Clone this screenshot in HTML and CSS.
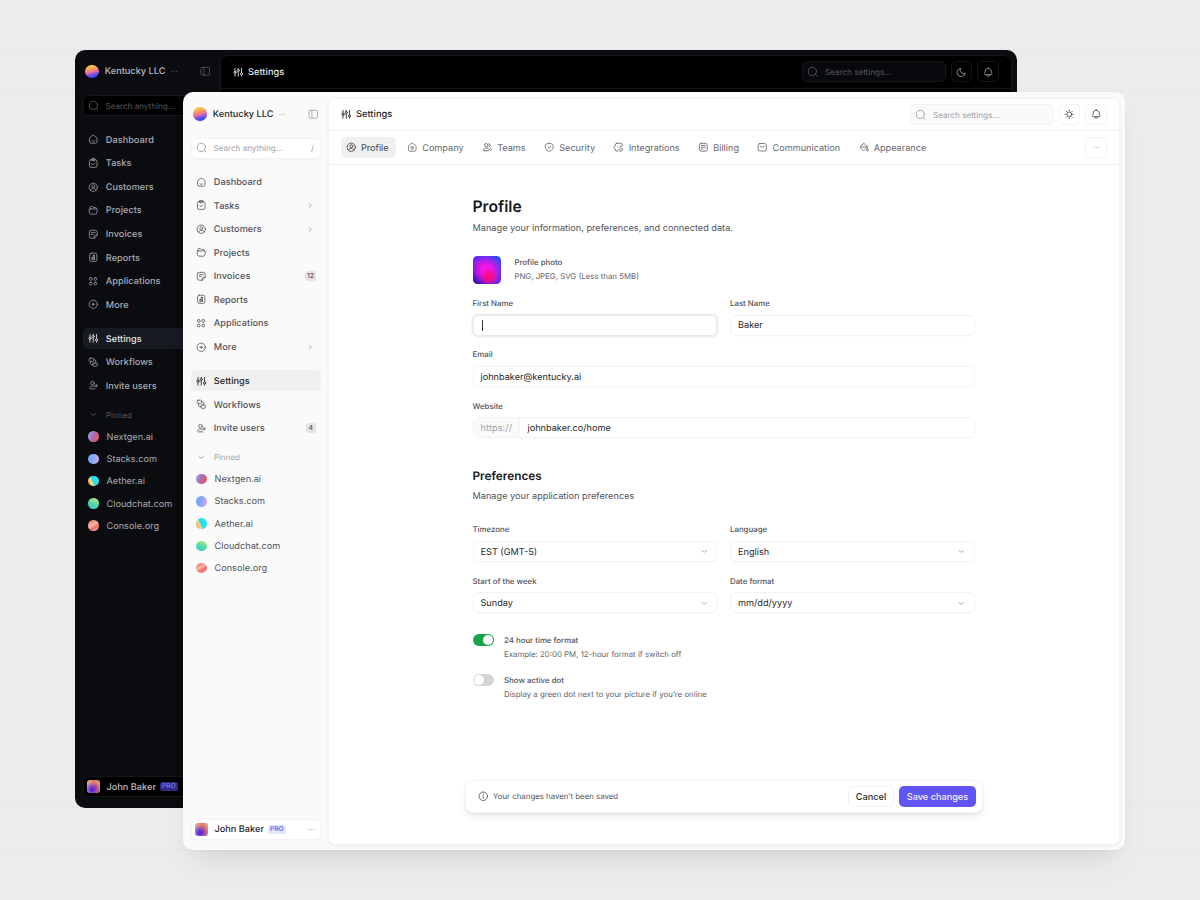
FILE: index.html
```html
<!DOCTYPE html>
<html lang="en">
<head>
<meta charset="utf-8">
<title>Settings</title>
<link rel="stylesheet" href="styles.css">
</head>
<body>
<svg class="defs" aria-hidden="true">
<symbol id="home" viewBox="0 0 16 16"><path d="M2.200 7.200c0-.8.4-1.600 1-2.100l3.300-2.800a2.300 2.300 0 0 1 3 0l3.300 2.800c.6.5 1 1.300 1 2.100v4.300a2.500 2.500 0 0 1-2.500 2.500H4.700a2.500 2.500 0 0 1-2.500-2.500z"/><path d="M5.800 10.300c1.200 1.300 3.200 1.300 4.400 0"/></symbol>
<symbol id="task" viewBox="0 0 16 16"><rect x="2.200" y="2.600" width="11.600" height="11.700" rx="2.600"/><path d="M5.500 1.500v1.800c0 .4.300.7.700.7h3.600c.4 0 .7-.3.700-.7V1.500zM5.800 8.900l1.600 1.600 2.900-3"/></symbol>
<symbol id="user" viewBox="0 0 16 16"><circle cx="8" cy="8" r="6.300"/><circle cx="8" cy="6.500" r="2.200"/><path d="M4 12.700c.3-2 1.800-3.100 4-3.100s3.700 1.100 4 3.100"/></symbol>
<symbol id="folder" viewBox="0 0 16 16"><path d="M3 6V3.600c0-.8.6-1.400 1.400-1.400h2.100l1.500 1.600h3.600c.8 0 1.400.6 1.400 1.400V6M3.200 6h9.600c1 0 1.700.9 1.500 1.900l-.8 4.100c-.2 1.200-1.200 2-2.400 2H4.900c-1.200 0-2.200-.8-2.400-2l-.8-4.100C1.500 6.900 2.200 6 3.200 6z"/></symbol>
<symbol id="invoice" viewBox="0 0 16 16"><path d="M9 14H5a3 3 0 0 1-3-3V5a3 3 0 0 1 3-3h6a3 3 0 0 1 3 3v4.500L9.500 14zM9.500 14v-2.500c0-1.100.9-2 2-2H14M5 5.500h6M5 8.300h3"/></symbol>
<symbol id="report" viewBox="0 0 16 16"><rect x="2.500" y="1.800" width="11" height="12.400" rx="2.600"/><path d="M5.800 11h4.400M6.200 11V8.200M8 11V5M9.800 11V5M8 5h1.800M6.200 8.200H8"/></symbol>
<symbol id="apps" viewBox="0 0 16 16"><rect x="2.200" y="2.500" width="4" height="4" rx="1.600"/><rect x="9.200" y="2.500" width="4" height="4" rx="1.600"/><rect x="2.200" y="9.500" width="4" height="4" rx="1.600"/><rect x="9.200" y="9.500" width="4" height="4" rx="1.600"/></symbol>
<symbol id="plus" viewBox="0 0 16 16"><circle cx="8" cy="8" r="6.300"/><path d="M8 6v4M6 8h4"/></symbol>
<symbol id="sliders" viewBox="0 0 16 16"><path d="M3 2v4M3 10v4M8 2v1.500M8 7.500V14M13 2v6.500M13 12.500V14"/><circle cx="3" cy="8" r="1.700"/><circle cx="8" cy="5.400" r="1.700"/><circle cx="13" cy="10.500" r="1.700"/></symbol>
<symbol id="flow" viewBox="0 0 16 16"><rect x="1.800" y="1.800" width="6.600" height="5" rx="1.500"/><rect x="7.600" y="9.200" width="6.600" height="5" rx="1.500"/><path d="M8.400 4.300h1.800c1 0 1.700.7 1.700 1.700v3.200M4 6.800V10c0 1 .7 1.700 1.700 1.700h1.900"/></symbol>
<symbol id="invite" viewBox="0 0 16 16"><circle cx="6.800" cy="4.800" r="2.700"/><path d="M10.500 13.500H4c-1.200 0-1.900-.9-1.600-1.900.6-1.700 2.200-2.400 4.400-2.400 1.200 0 2.300.3 3.100.9M12.500 6.800v4M10.500 8.800h4"/></symbol>
<symbol id="team" viewBox="0 0 16 16"><circle cx="6.500" cy="5" r="2.700"/><path d="M3.500 13.300h6.300c1 0 1.700-.8 1.300-1.700-.7-1.600-2.400-2.300-4.600-2.300s-3.900.7-4.500 2.300c-.4.9.4 1.700 1.500 1.700zM10.500 2.400a2.700 2.700 0 0 1 .5 5M12.600 9.500c1 .5 1.700 1.200 1.900 2.200.2.900-.4 1.600-1.300 1.600"/></symbol>
<symbol id="company" viewBox="0 0 16 16"><path d="M2.200 7.200c0-.8.4-1.600 1-2.100l3.300-2.800a2.300 2.300 0 0 1 3 0l3.300 2.800c.6.5 1 1.300 1 2.100v4.300a2.500 2.500 0 0 1-2.500 2.500H4.700a2.500 2.500 0 0 1-2.500-2.500zM9.700 7.300a2.200 2.200 0 1 0 0 3M8 8.800h1.500"/></symbol>
<symbol id="shield" viewBox="0 0 16 16"><path d="M6.900 2 3.500 3.200C2.600 3.500 2 4.300 2 5.300v2.300c0 3 1.900 5 4.900 6.300.7.300 1.500.3 2.200 0 3-1.300 4.900-3.300 4.900-6.300V5.300c0-1-.6-1.800-1.500-2.100L9.100 2a3.300 3.300 0 0 0-2.200 0zM5.800 7.800l1.700 1.700 3-3"/></symbol>
<symbol id="puzzle" viewBox="0 0 16 16"><path d="M5.500 2H12c1.100 0 2 .9 2 2v2.300c-2.200-.6-3.300.3-3.300 1.700s1.100 2.300 3.300 1.700V12c0 1.100-.9 2-2 2h-1.700c.5-1.700-.3-2.700-1.600-2.700S6.600 12.300 7.100 14H5.500c-1.100 0-2-.9-2-2v-1.500C2 10.200 1.300 9.300 1.300 8.200S2 6.200 3.500 6V4c0-1.100.9-2 2-2z"/></symbol>
<symbol id="bill" viewBox="0 0 16 16"><rect x="2" y="2" width="12" height="12" rx="2.800"/><path d="M5 5.300h6M5 8h6M5 10.700h2.500"/></symbol>
<symbol id="mail" viewBox="0 0 16 16"><rect x="1.700" y="2.300" width="12.600" height="11.400" rx="2.800"/><path d="m4.700 6 2.300 1.700c.6.400 1.400.4 2 0L11.300 6"/></symbol>
<symbol id="paint" viewBox="0 0 16 16"><path d="m6.200 2.900-4 4c-.6.600-.6 1.500 0 2.100l3.500 3.500c.6.600 1.500.6 2.100 0L13 7.300 8.500 2.900a1.600 1.600 0 0 0-2.300 0zM2.200 7.500H13M13 10.300c.8 1 1.300 1.600 1.300 2.300a1.300 1.300 0 0 1-2.600 0c0-.7.500-1.300 1.300-2.300z"/></symbol>
<symbol id="search" viewBox="0 0 16 16"><circle cx="7.500" cy="7.500" r="5.700"/><path d="m11.800 11.800 2.200 2.200"/></symbol>
<symbol id="panel" viewBox="0 0 16 16"><rect x="1.500" y="2" width="13" height="12" rx="2"/><path d="M6 2v12"/></symbol>
<symbol id="sun" viewBox="0 0 16 16"><circle cx="8" cy="8" r="3.500"/><path d="M8 1.500v1.300M8 13.200v1.300M1.500 8h1.300M13.200 8h1.300M3.400 3.400l.9.900M11.700 11.700l.9.900M3.400 12.600l.9-.9M11.700 4.300l.9-.9"/></symbol>
<symbol id="moon" viewBox="0 0 16 16"><path d="M6.600 2.200a5.600 5.600 0 0 0 7.300 7.300A6.200 6.200 0 1 1 6.600 2.200z"/></symbol>
<symbol id="bell" viewBox="0 0 16 16"><path d="M8 1.800c-2.700 0-4.500 2-4.600 4.400-.1 1.700-.2 2.200-.9 3.400-.6 1.100 0 2.200 1.200 2.200h8.600c1.200 0 1.800-1.100 1.200-2.200-.7-1.200-.8-1.700-.9-3.400C12.500 3.800 10.700 1.800 8 1.800zM5.800 11.800c0 1.500 1 2.400 2.200 2.400s2.200-.9 2.200-2.400"/></symbol>
<symbol id="info" viewBox="0 0 16 16"><circle cx="8" cy="8" r="6.500"/><path d="M8 7.500v3.700M8 4.800v.6"/></symbol>
<symbol id="right" viewBox="0 0 16 16"><path d="m6.500 5 3 3-3 3"/></symbol>
<symbol id="down" viewBox="0 0 16 16"><path d="M4.500 7 8 9.500 11.500 7"/></symbol>
<symbol id="dots" viewBox="0 0 16 16"><path d="M4.500 8h.1M8 8h.1M11.500 8h.1" stroke-width="1.700"/></symbol>
</svg>

<div class="stage">
<section class="window dark">
  <aside class="sidebar">
    <div class="brand"><span class="logo"></span><b>Kentucky LLC</b><svg class="dots"><use href="#dots"/></svg><svg class="toggle-panel"><use href="#panel"/></svg></div>
    <div class="search"><svg><use href="#search"/></svg><span>Search anything...</span></div>
    <nav class="nav">
      <a><svg><use href="#home"/></svg>Dashboard</a>
      <a><svg><use href="#task"/></svg>Tasks</a>
      <a><svg><use href="#user"/></svg>Customers</a>
      <a><svg><use href="#folder"/></svg>Projects</a>
      <a><svg><use href="#invoice"/></svg>Invoices</a>
      <a><svg><use href="#report"/></svg>Reports</a>
      <a><svg><use href="#apps"/></svg>Applications</a>
      <a><svg><use href="#plus"/></svg>More</a>
    </nav>
    <nav class="nav">
      <a class="active"><svg><use href="#sliders"/></svg>Settings</a>
      <a><svg><use href="#flow"/></svg>Workflows</a>
      <a><svg><use href="#invite"/></svg>Invite users</a>
    </nav>
    <div class="pinned-title"><svg><use href="#down"/></svg>Pinned</div>
    <div class="pinned">
      <a><i class="orb nextgen"></i>Nextgen.ai</a>
      <a><i class="orb stacks"></i>Stacks.com</a>
      <a><i class="orb aether"></i>Aether.ai</a>
      <a><i class="orb cloud"></i>Cloudchat.com</a>
      <a><i class="orb console"></i>Console.org</a>
    </div>
    <div class="account"><i class="face"></i><b>John Baker</b><em>PRO</em></div>
  </aside>
  <main class="main">
    <header class="topbar"><svg><use href="#sliders"/></svg><b>Settings</b>
      <div class="search"><svg><use href="#search"/></svg><span>Search settings...</span></div>
      <button class="square"><svg><use href="#moon"/></svg></button>
      <button class="square"><svg><use href="#bell"/></svg></button>
    </header>
  </main>
</section>

<section class="window light">
  <aside class="sidebar">
    <div class="brand"><span class="logo"></span><b>Kentucky LLC</b><svg class="dots"><use href="#dots"/></svg><svg class="toggle-panel"><use href="#panel"/></svg></div>
    <div class="search"><svg><use href="#search"/></svg><span>Search anything...</span><kbd>/</kbd></div>
    <nav class="nav">
      <a><svg><use href="#home"/></svg>Dashboard</a>
      <a><svg><use href="#task"/></svg>Tasks<svg class="end"><use href="#right"/></svg></a>
      <a><svg><use href="#user"/></svg>Customers<svg class="end"><use href="#right"/></svg></a>
      <a><svg><use href="#folder"/></svg>Projects</a>
      <a><svg><use href="#invoice"/></svg>Invoices<span class="count">12</span></a>
      <a><svg><use href="#report"/></svg>Reports</a>
      <a><svg><use href="#apps"/></svg>Applications</a>
      <a><svg><use href="#plus"/></svg>More<svg class="end"><use href="#right"/></svg></a>
    </nav>
    <nav class="nav">
      <a class="active"><svg><use href="#sliders"/></svg>Settings</a>
      <a><svg><use href="#flow"/></svg>Workflows</a>
      <a><svg><use href="#invite"/></svg>Invite users<span class="count">4</span></a>
    </nav>
    <div class="pinned-title"><svg><use href="#down"/></svg>Pinned</div>
    <div class="pinned">
      <a><i class="orb nextgen"></i>Nextgen.ai</a>
      <a><i class="orb stacks"></i>Stacks.com</a>
      <a><i class="orb aether"></i>Aether.ai</a>
      <a><i class="orb cloud"></i>Cloudchat.com</a>
      <a><i class="orb console"></i>Console.org</a>
    </div>
    <div class="account"><i class="face"></i><b>John Baker</b><em>PRO</em><svg class="dots"><use href="#dots"/></svg></div>
  </aside>
  <main class="main">
    <header class="topbar"><svg><use href="#sliders"/></svg><b>Settings</b>
      <div class="search"><svg><use href="#search"/></svg><span>Search settings...</span></div>
      <button class="square"><svg><use href="#sun"/></svg></button>
      <button class="square"><svg><use href="#bell"/></svg></button>
    </header>
    <nav class="tabs">
      <a class="active"><svg><use href="#user"/></svg>Profile</a>
      <a><svg><use href="#company"/></svg>Company</a>
      <a><svg><use href="#team"/></svg>Teams</a>
      <a><svg><use href="#shield"/></svg>Security</a>
      <a><svg><use href="#puzzle"/></svg>Integrations</a>
      <a><svg><use href="#bill"/></svg>Billing</a>
      <a><svg><use href="#mail"/></svg>Communication</a>
      <a><svg><use href="#paint"/></svg>Appearance</a>
      <button class="square"><svg><use href="#dots"/></svg></button>
    </nav>
    <div class="content">
      <h1>Profile</h1>
      <p class="lead">Manage your information, preferences, and connected data.</p>
      <div class="photo"><span class="picture"></span><div><strong>Profile photo</strong><small>PNG, JPEG, SVG (Less than 5MB)</small></div></div>
      <div class="fields">
        <div class="field"><label>First Name</label><div class="input focus"><span class="caret"></span></div></div>
        <div class="field"><label>Last Name</label><div class="input">Baker</div></div>
        <div class="field wide"><label>Email</label><div class="input">johnbaker@kentucky.ai</div></div>
        <div class="field wide"><label>Website</label><div class="input website"><span class="prefix">https://</span>johnbaker.co/home</div></div>
      </div>
      <h2>Preferences</h2>
      <p class="lead">Manage your application preferences</p>
      <div class="fields prefs">
        <div class="field"><label>Timezone</label><div class="input">EST (GMT-5)<svg><use href="#down"/></svg></div></div>
        <div class="field"><label>Language</label><div class="input">English<svg><use href="#down"/></svg></div></div>
        <div class="field"><label>Start of the week</label><div class="input">Sunday<svg><use href="#down"/></svg></div></div>
        <div class="field"><label>Date format</label><div class="input">mm/dd/yyyy<svg><use href="#down"/></svg></div></div>
      </div>
      <div class="switch-row"><span class="switch on"></span><div><strong>24 hour time format</strong><small>Example: 20:00 PM, 12-hour format if switch off</small></div></div>
      <div class="switch-row"><span class="switch"></span><div><strong>Show active dot</strong><small>Display a green dot next to your picture if you’re online</small></div></div>
    </div>
    <div class="savebar"><svg><use href="#info"/></svg><span>Your changes haven’t been saved</span><button class="cancel">Cancel</button><button class="save">Save changes</button></div>
  </main>
</section>
</div>
</body>
</html>
```
FILE: styles.css
```css
* { box-sizing: border-box; }
body { margin: 0; font-family: Inter, "Liberation Sans", sans-serif; font-size: 9.16px; letter-spacing: 0; text-rendering: geometricPrecision; }
h1, h2, p { margin: 0; }
button { font: inherit; letter-spacing: inherit; padding: 0; margin: 0; }
b { font-weight: 500; padding-top: .9px; }
strong, small { display: block; font-size: 7.85px; }
svg { width: 10.5px; height: 10.5px; flex: none; fill: none; stroke: currentColor; stroke-width: 1.3; stroke-linecap: round; stroke-linejoin: round; }
.defs { position: absolute; width: 0; height: 0; }

.stage { position: relative; width: 1200px; height: 900px; overflow: hidden; background:
  repeating-linear-gradient(90deg, #e3e3e3 0 2px, transparent 2px 4px) 0 49px / 100% 1px no-repeat,
  repeating-linear-gradient(90deg, #e3e3e3 0 2px, transparent 2px 4px) 0 91px / 100% 1px no-repeat,
  repeating-linear-gradient(90deg, #e3e3e3 0 2px, transparent 2px 4px) 0 807px / 100% 1px no-repeat,
  repeating-linear-gradient(90deg, #e3e3e3 0 2px, transparent 2px 4px) 0 850px / 100% 1px no-repeat,
  #ececec; }

.window { position: absolute; display: flex; width: 941.5px; height: 758.3px; border-radius: 10px; color: var(--text); background: var(--bg); }
.dark { left: 75px; top: 49.7px; --bg: #0b0c10; --panel: #000; --line: #15171c; --box: #000; --box2: #08090d; --text: #a9abb1; --strong: #e4e4e7; --icon: #9698a0; --muted: #55575e; --active: #171a21; --brand: #b9bbc0; --pro: #312e81; --pro-text: #817cf3; }
.light { left: 183px; top: 92px; --bg: #fafafa; --panel: #fff; --line: #f3f3f4; --box: #fff; --box2: #fafafa; --text: #52525b; --strong: #27272a; --icon: #5c5c64; --muted: #a1a1aa; --active: #f0f0f1; --brand: #27272a; --pro: #e0e7ff; --pro-text: #5a52ec; box-shadow: 0 20px 28px -12px rgba(0,0,0,.1), 0 4px 14px rgba(0,0,0,.02); }

.sidebar { width: 145px; padding: 0 7px 10.8px 8px; display: flex; flex-direction: column; flex: none; }
.brand { height: 43.5px; display: flex; align-items: center; padding: 0 2.5px 0 2px; color: var(--brand); font-size: 9.2px; }
.logo { width: 13.5px; height: 13.5px; border-radius: 50%; margin-right: 6.3px; background: linear-gradient(165deg, #fbc947 12%, #fa9a62 35%, #e76aa5 54%, #6550ee 72%, #2440fb 92%); }
.brand .dots { margin-left: 4px; color: var(--muted); }
.toggle-panel { margin-left: auto; color: var(--muted); }
.search { height: 21px; border: 1px solid var(--line); border-radius: 5.5px; background: var(--box); display: flex; align-items: center; color: var(--muted); font-size: 8.1px; }
.search span { padding-top: .5px; }
.sidebar .search { margin-top: 2px; padding: 0 6px 0 4px; flex: none; box-shadow: 0 1px 1px rgba(0,0,0,.025); }
.search svg { width: 11.5px; height: 11.5px; margin-right: 6px; }
.search kbd { margin-left: auto; font: inherit; padding-top: .5px; }
.nav { margin-top: 13px; display: flex; flex-direction: column; gap: 2.55px; }
.nav a { height: 21px; display: flex; align-items: center; padding: 1.3px 5px 0; border-radius: 5px; letter-spacing: .03px; font-weight: 450; }
.nav a > svg, .nav a > span, .orb, .tabs a > svg { margin-bottom: 1.3px; }
.input > svg { margin-bottom: .9px; }
.nav a > svg:first-child { margin-right: 7.3px; color: var(--icon); }
.nav a > svg.end { margin-left: auto; margin-right: 1px; color: var(--muted); }
.nav a.active { background: var(--active); color: var(--strong); font-weight: 500; }
.nav a.active > svg:first-child { color: var(--strong); }
.count { margin-left: auto; height: 10.5px; min-width: 10.5px; padding: 0 2px; border-radius: 3px; background: #e4e4e7; font-size: 6.8px; line-height: 10.5px; text-align: center; font-weight: 500; letter-spacing: 0; }
.pinned-title { margin-top: 8px; height: 21px; display: flex; align-items: center; gap: 7.5px; padding-left: 5px; font-size: 7.85px; color: var(--muted); letter-spacing: .05px; }
.pinned a { height: 22.25px; display: flex; align-items: center; padding: 1.3px 0 0 5px; letter-spacing: .01px; }
.pinned { margin-top: .5px; }
.orb { width: 10.5px; height: 10.5px; border-radius: 50%; margin-right: 8px; }
.nextgen { background: linear-gradient(110deg, #8faaf0, #aa6eb8 45%, #dd5868 80%, #e79a86); }
.stacks { background: linear-gradient(100deg, #66a5fa, #8ea7f6 50%, #e1afe0); }
.aether { background: linear-gradient(65deg, #f79a48 10%, #f9dc81 32%, #22dcf0 50%, #36e7ec); }
.cloud { background: linear-gradient(200deg, #cff07b, #5edca5 45%, #2fc5d4); }
.console { background: linear-gradient(150deg, #f38b7b 20%, #f7b6a9 45%, #ee6b62 65%, #fac5b8); }
.account { margin-top: auto; height: 21px; display: flex; align-items: center; padding: 0 4px 0 3px; border: 1px solid var(--line); border-radius: 5.5px; background: var(--box); color: var(--brand); box-shadow: 0 1px 1px rgba(0,0,0,.025); }
.face { width: 13px; height: 13px; border-radius: 3px; margin-right: 6.5px; background: radial-gradient(circle at 40% 75%, #5924dd 10%, transparent 65%), linear-gradient(70deg, #d7cce5, #f0774b 65%, #bfa8b8); }
.account b { font-size: 9.2px; }
.account em { margin-left: 4px; height: 9px; padding: 0 2px; border-radius: 2.5px; font-style: normal; font-size: 6.7px; line-height: 9px; font-weight: 500; color: var(--pro-text); background: var(--pro); }
.account .dots { margin-left: auto; color: var(--muted); }

.main { flex: 1; min-width: 0; margin: 5.5px 5px 5px 0; border: 1px solid var(--line); border-radius: 8px; background: var(--panel); display: flex; flex-direction: column; }
.light .main { box-shadow: 0 1px 3px rgba(0,0,0,.06); }
.topbar { height: 32.5px; border-bottom: 1px solid var(--line); display: flex; align-items: center; padding: 0 12px 0 11.5px; color: var(--strong); flex: none; }
.topbar b { margin-left: 5px; font-size: 9.3px; }
.topbar .search { margin-left: auto; width: 144px; padding-left: 4px; background: var(--box2); }
.topbar .search svg { margin-right: 7px; }
.square { width: 21.5px; height: 21px; margin-left: 5px; border: 1px solid var(--line); border-radius: 5.5px; background: transparent; color: var(--text); display: flex; align-items: center; justify-content: center; }
.topbar .square { color: var(--brand); }
.topbar .square svg { opacity: .85; }
.tabs { height: 34px; border-bottom: 1px solid var(--line); display: flex; align-items: center; gap: 5.3px; padding: .4px 12px 0 11.5px; flex: none; color: #68686f; }
.tabs a { height: 21px; display: flex; align-items: center; gap: 4.7px; padding: 1.3px 7.8px 0 5.3px; border-radius: 5px; letter-spacing: -.02px; }
.tabs .active { background: #f0f0f1; color: #44444b; }
.tabs .square { margin-left: auto; color: var(--muted); }

.content { width: 502px; margin-left: 143.5px; padding-top: 30.3px; }
h1 { font-size: 15.7px; line-height: 24px; font-weight: 600; color: #18181b; letter-spacing: 0; }
h2 { margin-top: 28px; font-size: 11.8px; line-height: 20px; font-weight: 600; color: #18181b; }
.lead { line-height: 18px; padding-top: .8px; font-size: 9.16px; letter-spacing: .01px; }
h2 + .lead { margin-top: .7px; }
.photo { margin-top: 17.9px; height: 28.5px; display: flex; gap: 13.4px; }
.picture { width: 28.5px; height: 28.5px; border-radius: 4.5px; background: radial-gradient(circle at 58% 75%, #fb0b74 5%, transparent 35%), radial-gradient(ellipse at 48% 50%, #f313e4 25%, transparent 80%), linear-gradient(45deg, #2411a0, #6c22ef 45%, #1855f6); }
strong { font-weight: 550; line-height: 12px; }
small { line-height: 17px; color: #63636b; }
.fields { margin-top: 12.5px; display: grid; grid-template-columns: 1fr 1fr; gap: 12.6px 13px; }
.lead + .fields.prefs { margin-top: 17.7px; }
.field { height: 38.7px; }
.wide { grid-column: 1 / -1; }
label { display: block; height: 12px; margin-bottom: 5.7px; line-height: 12px; font-size: 7.85px; font-weight: 550; }
.input { height: 21px; border: 1px solid #f3f3f4; border-radius: 5px; padding: 1.2px 7px 0; display: flex; align-items: center; color: #27272a; box-shadow: 0 1px 1px rgba(0,0,0,.01); }
.focus { padding-top: 0; border-color: #e9e9ea; box-shadow: 0 0 0 1.5px #eeeeef; }
.caret { width: 1px; height: 11px; margin-left: 1px; background: #333; }
.input svg { margin-left: auto; color: #a1a1aa; }
.website { padding-left: 0; }
.prefix { align-self: stretch; display: flex; align-items: center; width: 46.5px; margin: -1.2px 7.5px 0 0; padding: 1.2px 0 0 7px; border-right: 1px solid #f3f3f4; background: #fafafa; color: #a1a1aa; border-radius: 4px 0 0 4px; letter-spacing: .1px; }
.switch-row { display: flex; gap: 10px; height: 28px; margin-top: 11.8px; }
.prefs + .switch-row { margin-top: 20.5px; }
.switch { width: 21.5px; height: 12px; padding: 1px; border-radius: 6px; background: #d4d4d8; display: flex; }
.switch::before { content: ""; width: 10px; height: 10px; border-radius: 50%; background: #fff; }
.switch.on { background: #16a34a; justify-content: flex-end; }
.savebar { margin: auto 0 31.3px 136px; width: 517.5px; height: 33.5px; border: 1px solid #f4f4f5; border-radius: 8px; display: flex; align-items: center; padding: 0 5.5px 0 11.5px; font-size: 7.85px; background: #fff; box-shadow: 0 5px 9px -2px rgba(0,0,0,.1), 0 1px 2px rgba(0,0,0,.05); }
.savebar span { margin-left: 5px; }
.cancel, .save { height: 21px; border-radius: 5px; font-size: 9.16px; font-weight: 500; }
.cancel { width: 46px; margin-left: auto; border: 1px solid #f1f1f2; background: #fff; color: #27272a; }
.save { width: 77px; margin-left: 5px; border: 0; background: #6055f3; color: #f3f1ff; }
```
